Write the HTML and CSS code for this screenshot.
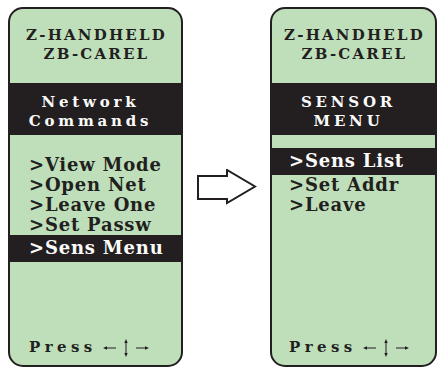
FILE: index.html
```html
<!DOCTYPE html>
<html>
<head>
  <title>Z-Handheld menus</title>
  <link rel="stylesheet" href="styles.css">
</head>
<body>
  <div class="scene">
    <div class="screen wide">
      <div class="head">Z-HANDHELD<br>ZB-CAREL</div>
      <div class="band">Network<br>Commands</div>
      <div class="menu">
        <div class="item">&gt;View Mode</div>
        <div class="item">&gt;Open Net</div>
        <div class="item">&gt;Leave One</div>
        <div class="item">&gt;Set Passw</div>
        <div class="item sel">&gt;Sens Menu</div>
      </div>
      <div class="foot">Press<svg class="keys" width="48" height="20" viewBox="0 0 48 20">
        <path d="M4 10H14M24 4V16M34 10H44" stroke="#231f20" stroke-width="1"/>
        <path d="M1 10L5 8.3V11.7Z M24 1L22.3 5H25.7Z M24 19L22.3 15H25.7Z M47 10L43 8.3V11.7Z" fill="#231f20"/>
      </svg></div>
    </div>

    <div class="between">
      <svg width="60" height="36" viewBox="0 0 60 36">
        <path d="M1 7H30V1L58 17.5L30 34V30H1Z" fill="#fff" stroke="#231f20" stroke-width="2" stroke-linejoin="miter"/>
      </svg>
    </div>

    <div class="screen narrow">
      <div class="head">Z-HANDHELD<br>ZB-CAREL</div>
      <div class="band">SENSOR<br>MENU</div>
      <div class="menu">
        <div class="item sel">&gt;Sens List</div>
        <div class="item">&gt;Set Addr</div>
        <div class="item">&gt;Leave</div>
      </div>
      <div class="foot">Press<svg class="keys" width="48" height="20" viewBox="0 0 48 20">
        <path d="M4 10H14M24 4V16M34 10H44" stroke="#231f20" stroke-width="1"/>
        <path d="M1 10L5 8.3V11.7Z M24 1L22.3 5H25.7Z M24 19L22.3 15H25.7Z M47 10L43 8.3V11.7Z" fill="#231f20"/>
      </svg></div>
    </div>
  </div>
</body>
</html>
```

FILE: styles.css
```css
body {
  margin: 0;
  background: #fff;
  font-family: "DejaVu Serif", "Liberation Serif", serif;
  font-weight: bold;
  color: #231f20;
}

.scene {
  display: flex;
  padding: 7px 0 0 8px;
}

.screen {
  box-sizing: border-box;
  height: 360px;
  border: 2px solid #231f20;
  border-radius: 15px;
  background: #bfdfbb;
  display: flex;
  flex-direction: column;
  overflow: hidden;
}
.screen.wide {
  width: 175px;
}
.screen.narrow {
  width: 167px;
}

.head {
  padding: 17px 0 19px 2px;
  font-size: 15px;
  line-height: 19px;
  letter-spacing: 2.2px;
  text-align: center;
}

.band {
  margin: 0 -2px;
  padding: 10px 10px 4px 0;
  background: #231f20;
  color: #fbfbfb;
  font-size: 15px;
  line-height: 19px;
  letter-spacing: 3.8px;
  text-align: center;
}

.menu {
  padding-top: 20px;
  font-size: 18px;
  line-height: 20px;
  letter-spacing: 0.8px;
}
.narrow .menu {
  padding-top: 13px;
}
.item {
  padding-left: 19px;
  white-space: nowrap;
}
.narrow .item {
  padding-left: 17px;
}
.item.sel {
  background: #231f20;
  color: #fbfbfb;
  padding-top: 3px;
  padding-bottom: 4px;
}

.foot {
  margin-top: auto;
  padding: 0 0 7px 19px;
  font-size: 15px;
  line-height: 19px;
  letter-spacing: 4.4px;
  white-space: nowrap;
}
.narrow .foot {
  padding-left: 17px;
}
.keys {
  vertical-align: -6px;
  margin-left: 5px;
}

.between {
  width: 87px;
  height: 360px;
  display: flex;
  align-items: center;
  justify-content: center;
}
```
